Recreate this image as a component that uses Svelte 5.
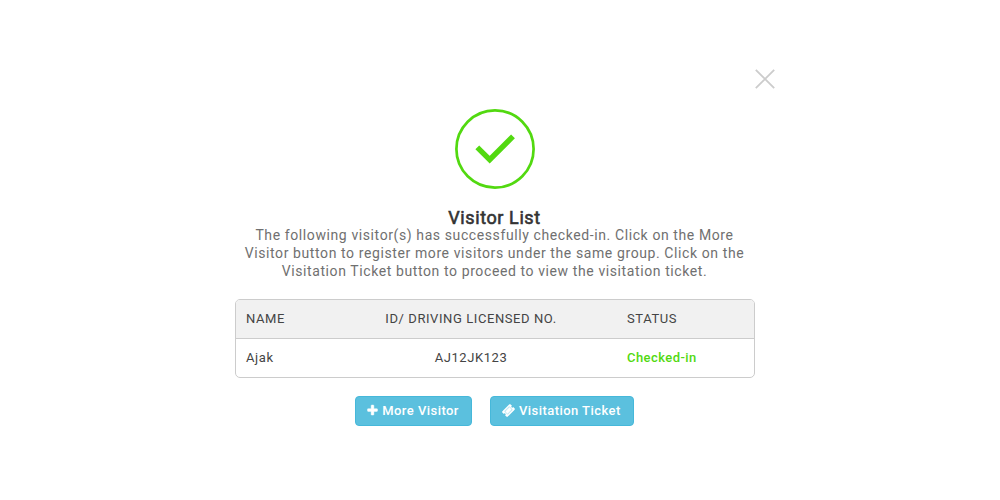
<script>
    export let visitors = [
        { name: 'Ajak', id: 'AJ12JK123', status: 'Checked-in' }
    ]
    export let visible = true

    function close() {
        visible = false
    }
</script>

{#if visible}
<div class="modal">
    <div class="modal-top">
        <button class="close" aria-label="Close" on:click={close}>
            <svg width="20" height="20" viewBox="0 0 20 20">
                <path d="M.8.8l18.4 18.4M19.2.8L.8 19.2" fill="none" stroke="#ccc" stroke-width="1.8"/>
            </svg>
        </button>
    </div>

    <svg class="tick" width="80" height="80" viewBox="0 0 80 80">
        <circle cx="40" cy="40" r="38.6" fill="none" stroke="#52d910" stroke-width="2.7"/>
        <path d="M22.3 38.3L34.7 50.7L58 27.4" fill="none" stroke="#52d910" stroke-width="5.4"/>
    </svg>

    <h4>Visitor List</h4>
    <p>
        The following visitor(s) has successfully checked-in. Click on the More Visitor button to
        register more visitors under the same group. Click on the Visitation Ticket button to proceed
        to view the visitation ticket.
    </p>

    <div class="table">
        <div class="row head">
            <span>NAME</span>
            <span class="center">ID/ DRIVING LICENSED NO.</span>
            <span>STATUS</span>
        </div>
        {#each visitors as visitor}
        <div class="row">
            <span>{visitor.name}</span>
            <span class="center">{visitor.id}</span>
            <span class="status">{visitor.status}</span>
        </div>
        {/each}
    </div>

    <div class="actions">
        <button class="btn">
            <svg width="11" height="13" viewBox="128 0 1536 1792">
                <path fill="currentColor" stroke="currentColor" stroke-width="60" d="M1600 736v192q0 40-28 68t-68 28h-416v416q0 40-28 68t-68 28h-192q-40 0-68-28t-28-68v-416h-416q-40 0-68-28t-28-68v-192q0-40 28-68t68-28h416v-416q0-40 28-68t68-28h192q40 0 68 28t28 68v416h416q40 0 68 28t28 68z"/>
            </svg>
            <span>More Visitor</span>
        </button>
        <button class="btn">
            <svg width="13" height="13" viewBox="0 0 1792 1792">
                <path fill="currentColor" stroke="currentColor" stroke-width="90" d="M1024 452l316 316-572 572-316-316zm-211 979l618-618q19-19 19-45t-19-45l-362-362q-18-18-45-18t-45 18l-618 618q-19 19-19 45t19 45l362 362q18 18 45 18t45-18zm889-637l-907 908q-37 37-90.5 37t-90.5-37l-126-126q56-56 56-136t-56-136-136-56-136 56l-125-126q-37-37-37-90.5t37-90.5l907-906q37-37 90.5-37t90.5 37l125 125q-56 56-56 136t56 136 136 56 136-56l126 125q37 37 37 90.5t-37 90.5z"/>
            </svg>
            <span>Visitation Ticket</span>
        </button>
    </div>
</div>
{/if}

<style>
:global(body) {
    background: #fff;
}

.modal {
    box-sizing: border-box;
    width: 560px;
    margin-left: 215px;
    padding-top: 69px;
    display: flex;
    flex-direction: column;
    align-items: center;
    font-family: Roboto, sans-serif;
    letter-spacing: 0.58px;
}

.modal-top {
    width: 100%;
    height: 40px;
    display: flex;
    justify-content: flex-end;
    align-items: flex-start;
}

.close {
    padding: 0;
    border: none;
    background: none;
    cursor: pointer;
}

.close svg, .tick {
    display: block;
}

h4 {
    margin: 19px 0 0;
    padding-right: 1px;
    font-size: 18px;
    font-weight: 400;
    line-height: 20px;
    letter-spacing: 0.6px;
    color: #333;
    -webkit-text-stroke: 0.6px #333;
}

p {
    width: 520px;
    margin: -2px 0 0;
    padding-right: 1px;
    font-size: 14px;
    line-height: 18px;
    letter-spacing: 0.6px;
    text-align: center;
    color: #707070;
}

.table {
    box-sizing: border-box;
    width: 520px;
    margin-top: 19px;
    border: 1px solid #ccc;
    border-radius: 5px;
    overflow: hidden;
    font-size: 13px;
    color: #444;
}

.row {
    display: grid;
    grid-template-columns: 89px 292px 137px;
    height: 38px;
    line-height: 38px;
}

.row + .row {
    border-top: 1px solid #ccc;
}

.row span {
    padding: 0 10px;
}

.row .center {
    text-align: center;
}

.head {
    background: #f1f1f1;
}

.row .status {
    color: #52d910;
    font-weight: 500;
    letter-spacing: 0.43px;
}

.actions {
    display: flex;
    gap: 18px;
    margin-top: 18px;
    padding-right: 1px;
}

.btn {
    box-sizing: border-box;
    height: 30px;
    padding: 0 12px 2px 11px;
    display: flex;
    align-items: center;
    gap: 4px;
    border: 1px solid #46b8da;
    border-radius: 4px;
    background: #5bc0de;
    color: #fff;
    font-family: inherit;
    font-size: 13px;
    font-weight: 500;
    letter-spacing: 0.45px;
    cursor: pointer;
}
</style>
